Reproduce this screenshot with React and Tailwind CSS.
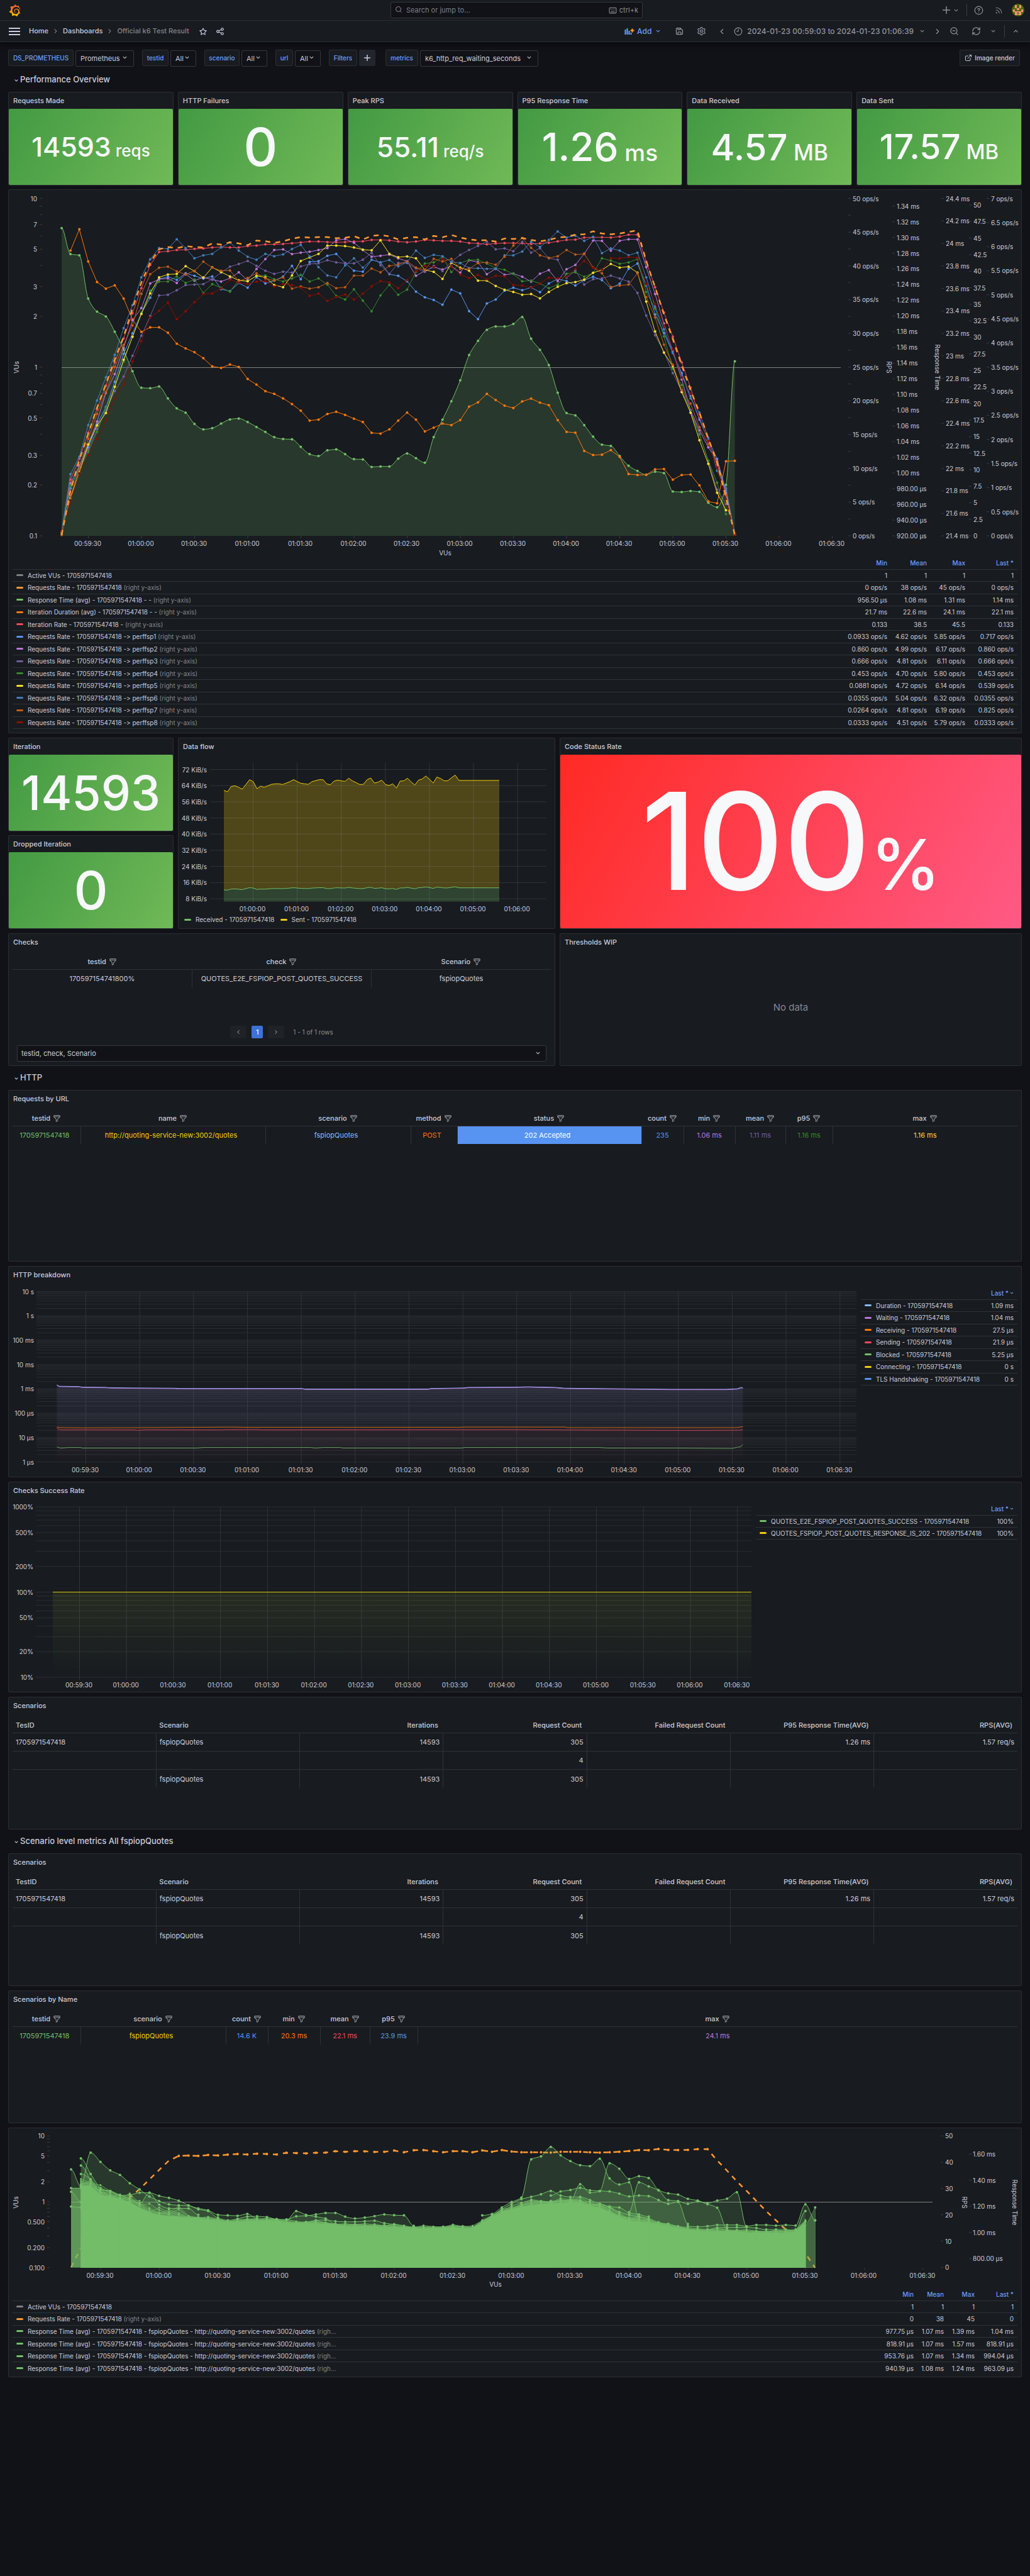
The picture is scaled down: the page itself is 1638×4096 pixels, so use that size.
import React from "react";
import { Search, Keyboard, Settings, ZoomOut, RefreshCw, Rss, ExternalLink, ChevronLeft, ChevronRight } from "lucide-react";
import { SiGrafana } from "react-icons/si";

/* ---------- icons ---------- */

const PATHS = {
  filter:
    "M19,2H5A3,3,0,0,0,2,5V6.17a3,3,0,0,0,.25,1.2l0,.06a2.81,2.81,0,0,0,.59.86L9,14.41V21a1,1,0,0,0,.47.85A1,1,0,0,0,10,22a1,1,0,0,0,.45-.11l4-2A1,1,0,0,0,15,19V14.41l6.12-6.12a2.81,2.81,0,0,0,.59-.86l0-.06A3,3,0,0,0,22,6.17V5A3,3,0,0,0,19,2ZM13.29,13.29A1,1,0,0,0,13,14v4.38l-2,1V14a1,1,0,0,0-.29-.71L5.41,8H18.59ZM20,6H4V5A1,1,0,0,1,5,4H19a1,1,0,0,1,1,1Z",
  star: "M22,9.67A1,1,0,0,0,21.14,9l-5.69-.83L12.9,3a1,1,0,0,0-1.8,0L8.55,8.16,2.86,9a1,1,0,0,0-.81.68,1,1,0,0,0,.25,1l4.13,4-1,5.68A1,1,0,0,0,6.9,21.44L12,18.77l5.1,2.67a.93.93,0,0,0,.46.12,1,1,0,0,0,.59-.19,1,1,0,0,0,.4-1l-1-5.68,4.13-4A1,1,0,0,0,22,9.67Zm-6.15,4a1,1,0,0,0-.29.88l.72,4.2-3.76-2a1.06,1.06,0,0,0-.94,0l-3.76,2,.72-4.2a1,1,0,0,0-.29-.88l-3-3,4.21-.61a1,1,0,0,0,.76-.55L12,5.7l1.88,3.82a1,1,0,0,0,.76.55l4.21.61Z",
  down: "M17,9.17a1,1,0,0,0-1.41,0L12,12.71,8.46,9.17a1,1,0,0,0-1.41,0,1,1,0,0,0,0,1.42l4.24,4.24a1,1,0,0,0,1.42,0L17,10.59A1,1,0,0,0,17,9.17Z",
  share:
    "M18,14a4,4,0,0,0-3.08,1.48l-5.1-2.35a3.64,3.64,0,0,0,0-2.26l5.1-2.35A4,4,0,1,0,14,6a4.17,4.17,0,0,0,.07.71L8.79,9.14a4,4,0,1,0,0,5.72l5.28,2.43A4.17,4.17,0,0,0,14,18a4,4,0,1,0,4-4ZM18,4a2,2,0,1,1-2,2A2,2,0,0,1,18,4ZM6,14a2,2,0,1,1,2-2A2,2,0,0,1,6,14Zm12,6a2,2,0,1,1,2-2A2,2,0,0,1,18,20Z",
  save: "m20.71 9.29-6-6a1 1 0 0 0-.32-.21A1.09 1.09 0 0 0 14 3H6a3 3 0 0 0-3 3v12a3 3 0 0 0 3 3h12a3 3 0 0 0 3-3v-8a1 1 0 0 0-.29-.71zM9 5h4v2H9zm6 14H9v-3a1 1 0 0 1 1-1h4a1 1 0 0 1 1 1zm4-1a1 1 0 0 1-1 1h-1v-3a3 3 0 0 0-3-3h-4a3 3 0 0 0-3 3v3H6a1 1 0 0 1-1-1V6a1 1 0 0 1 1-1h1v3a1 1 0 0 0 1 1h6a1 1 0 0 0 1-1V6.41l4 4z",
};

function Icon({ name, className }) {
  return (
    <svg viewBox="0 0 24 24" fill="currentColor" className={className} aria-hidden="true">
      <path d={PATHS[name]} />
    </svg>
  );
}

function LogoIcon() {
  return (
    <>
      <svg width="0" height="0" className="absolute" aria-hidden="true">
        <defs>
          <linearGradient id="logo" x1="0" y1="1" x2="0" y2="0">
            <stop offset="0" stopColor="#fbca0a" />
            <stop offset="0.45" stopColor="#f9871b" />
            <stop offset="1" stopColor="#f05a2b" />
          </linearGradient>
        </defs>
      </svg>
      <SiGrafana className="size-[19px]" fill="url(#logo)" />
    </>
  );
}

function HelpIcon() {
  return (
    <svg viewBox="0 0 24 24" className="size-[15px]" fill="none" stroke="currentColor" strokeWidth="2" strokeLinecap="round">
      <circle cx="12" cy="12" r="10" />
      <path d="M9.5 9.5a2.5 2.5 0 1 1 3.5 2.3c-.7.3-1 .8-1 1.4M12 17v.1" />
    </svg>
  );
}

function ClockIcon() {
  return (
    <svg viewBox="0 0 24 24" className="size-[14px]" fill="none" stroke="currentColor" strokeWidth="2" strokeLinecap="round" strokeLinejoin="round">
      <circle cx="12" cy="12" r="10" />
      <path d="M12 6v6H8" />
    </svg>
  );
}

function AddPanelIcon() {
  return (
    <svg viewBox="0 0 16 13" className="h-[13px] w-[16px]" fill="none">
      <path d="M1.5 4v8M4.500 2v10M7.500 6v6M10.500 9v3" stroke="#6e9fff" strokeWidth="2" />
      <path d="M12.500 2.500v6M9.500 5.500h6" stroke="#ff9830" strokeWidth="2" />
    </svg>
  );
}

function Avatar() {
  return (
    <svg viewBox="0 0 20 20" className="size-[20px] rounded-full">
      <rect width="20" height="20" fill="#4d6a05" />
      <path
        fill="#f98f7c"
        d="M5 2h3v5h4V2h3v5h-3v3H8V7H5zM2 9h3v3h3v3H5v-2H2zM18 9h-3v3h-3v3h3v-2h3zM8 12h4v2H8zM5 15h4v3H5zM11 15h4v3h-4zM9 16h2v1H9z"
      />
    </svg>
  );
}

/* ---------- chart helpers ---------- */

const GREEN = "#73bf69";

const seriesPoints = (data, x0, step, y0, k) =>
  data.map((v, i) => (v == null ? null : [x0 + i * step, y0 + v * k])).filter(Boolean);

const line = (pts) => "M" + pts.map(([x, y]) => `${x.toFixed(1)} ${y.toFixed(1)}`).join("L");

function smooth(pts) {
  const n = pts.length;
  const slope = pts.map((p, i) => {
    if (i === 0 || i === n - 1) return 0;
    const a = (p[1] - pts[i - 1][1]) / (p[0] - pts[i - 1][0]);
    const b = (pts[i + 1][1] - p[1]) / (pts[i + 1][0] - p[0]);
    return a * b <= 0 ? 0 : (2 * a * b) / (a + b);
  });
  let d = `M${pts[0][0]} ${pts[0][1]}`;
  for (let i = 1; i < n; i++) {
    const [xa, ya] = pts[i - 1];
    const [xb, yb] = pts[i];
    const h = (xb - xa) / 3;
    d += `C${xa + h} ${ya + slope[i - 1] * h} ${xb - h} ${yb - slope[i] * h} ${xb} ${yb}`;
  }
  return d;
}

const close = (d, pts, base) => `${d}L${pts[pts.length - 1][0]} ${base}L${pts[0][0]} ${base}Z`;

function Dots({ pts, color, r = 2 }) {
  return (
    <g fill={color}>
      {pts.map(([x, y], i) => (
        <circle key={i} cx={x.toFixed(1)} cy={y.toFixed(1)} r={r} />
      ))}
    </g>
  );
}

function T({ x, y, end, mid, rotate, children }) {
  return (
    <text
      x={x}
      y={y}
      fontSize="10"
      fill="#ccccdc"
      dominantBaseline="central"
      textAnchor={end ? "end" : mid ? "middle" : "start"}
      transform={rotate ? `rotate(${rotate} ${x} ${y})` : undefined}
    >
      {children}
    </text>
  );
}

const clock = (seconds) => {
  const p = (n) => String(n).padStart(2, "0");
  return `${p(Math.floor(seconds / 3600))}:${p(Math.floor(seconds / 60) % 60)}:${p(seconds % 60)}`;
};
const TIMES = Array.from({ length: 15 }, (_, i) => clock(3570 + i * 30));
const TICK = "#3a3d43";
const GRID = "#2b2e33";

/* ---------- overview chart data ---------- */

const RESPONSE = [180,290,295,478,533,554,618,695,785,855,857,850,900,942,961,1008,1031,1026,1007,989,985,1000,1021,1042,1064,1072,1073,1105,1136,1144,1120,1116,1136,1157,1158,1190,1188,1188,1155,1133,1153,1172,1064,990,912,824,717,657,610,596,596,585,556,648,695,759,876,962,972,1013,1062,1096,1101,1144,1185,1207,1223,1210,1216,1294,1296,1292,1295,1341,1360,1266,743];
const DURATION = [null,275,185,321,408,436,422,478,567,619,600,600,622,669,689,705,730,765,771,757,767,818,842,870,881,900,924,952,994,990,966,957,970,986,1000,1046,1049,1031,994,960,990,1040,1024,1007,1013,992,935,917,881,907,931,941,913,901,918,929,992,1042,1045,1122,1140,1138,1119,1148,1220,1224,1223,1200,1199,1244,1224,1222,1268,1336,1344,1166,1164];
const REQ_RATE = [1478,1290,1160,1050,940,840,735,640,520,410,325,270,260,265,256,260,262,245,250,240,245,252,233,235,243,236,225,218,220,218,218,223,221,214,228,213,209,215,228,221,218,228,213,219,209,220,228,232,231,237,224,226,222,230,236,230,220,217,208,206,194,203,206,203,196,190,320,430,545,650,760,865,960,1070,1170,1320,1478];
const ITER_RATE = [1470,1243,1155,1046,946,846,748,646,540,434,336,281,278,273,271,268,266,262,260,262,262,256,254,249,249,247,244,241,237,237,239,240,239,237,236,230,230,232,237,240,237,230,232,234,234,237,243,245,249,245,243,243,244,247,245,242,236,230,229,220,219,219,220,216,208,208,322,430,537,639,748,855,980,1080,1180,1300,1476];
const NODES = [
  ["#5794f2", [1470,1281,1190,1108,1010,937,830,712,625,540,475,395,386,399,371,382,394,384,438,447,412,432,388,414,402,385,340,396,323,320,297,289,328,360,364,314,325,375,382,405,449,473,484,504,440,456,531,565,499,482,445,432,443,431,451,414,395,404,423,400,386,400,434,415,352,330,422,545,624,708,793,890,990,1075,1156,1290,1476]],
  ["#b877d9", [1470,1260,1185,1095,998,877,797,687,570,518,414,396,393,412,374,402,388,398,406,392,367,400,353,311,273,270,290,284,280,273,265,231,226,242,273,301,297,292,308,320,382,361,345,355,342,368,316,324,375,352,378,372,386,406,373,358,404,354,336,288,233,234,275,234,227,228,345,459,584,700,820,950,1035,1107,1165,1300,1476]],
  ["#705da0", [1470,1320,1190,1118,1030,950,870,808,720,635,552,465,462,443,421,419,417,396,368,343,332,319,340,360,374,364,368,342,332,329,316,325,329,329,314,285,337,374,327,328,350,365,340,362,322,293,273,255,237,270,266,278,238,284,265,308,314,390,360,419,396,393,381,393,406,454,550,633,705,793,870,950,1050,1165,1286,1347]],
  ["#37872d", [1470,1268,1200,1127,1042,941,850,744,640,537,445,406,406,385,412,398,454,417,432,449,400,404,382,380,396,406,393,378,406,393,419,467,482,439,487,532,465,420,462,440,365,330,325,303,366,328,315,314,330,350,356,374,405,402,414,434,419,373,367,386,370,308,317,331,325,311,450,520,638,775,844,960,1054,1163,1257,1390]],
  ["#fade2a", [1464,1322,1213,1095,1015,962,851,737,640,543,456,388,376,374,341,362,390,346,366,384,401,405,382,388,421,430,380,319,304,289,254,254,256,262,271,274,232,289,303,300,308,357,365,395,327,347,360,402,402,425,441,450,462,459,477,450,428,413,408,398,369,357,332,347,343,368,491,617,707,765,874,961,1077,1177,1299,1373]],
  ["#447ebc", [1462,1220,1147,1013,909,811,716,603,506,388,312,265,268,227,265,308,295,289,262,241,275,301,314,289,299,291,269,251,300,345,380,388,338,308,347,314,325,315,342,324,275,306,293,299,323,328,349,350,352,352,295,295,279,238,260,230,194,220,212,234,217,286,266,275,295,284,388,512,608,708,800,900,960,1068,1206,1280,1476]],
  ["#c15c17", [1478,1315,1198,1071,966,872,767,674,592,458,375,348,343,363,376,361,322,347,360,359,404,391,371,393,402,388,436,427,436,430,412,434,430,381,381,351,367,340,334,320,347,357,310,321,310,352,352,328,325,335,301,254,222,263,295,306,299,273,292,289,346,371,429,423,419,371,472,558,673,758,865,922,1022,1093,1168,1310,1476]],
  ["#890f02", [1463,1332,1217,1140,1070,992,900,840,745,658,558,530,495,565,531,493,458,457,435,398,411,417,406,404,427,417,421,432,467,457,488,471,461,482,457,426,404,410,434,400,362,340,345,310,343,376,391,378,397,382,384,421,423,432,414,390,393,386,352,319,347,356,307,308,302,306,417,500,591,693,812,880,975,1080,1194,1330,1476]],
];

const LOG_TICKS = [
  ["10", 10], ["", 9], ["", 8], ["7", 7], ["", 6], ["5", 5], ["", 4], ["3", 3], ["2", 2], ["1", 1],
  ["", 0.9], ["", 0.8], ["0.7", 0.7], ["", 0.6], ["0.5", 0.5], ["", 0.4], ["0.3", 0.3], ["0.2", 0.2], ["0.1", 0.1],
];

function OverviewChart() {
  const X0 = 98, STEP = 14.087, Y0 = 295, K = 0.376;
  const top = 315.5, base = 852;
  const pts = (d) => seriesPoints(d, X0, STEP, Y0, K);
  const ly = (v) => top + (1 - Math.log10(v)) * ((base - top) / 2);
  const axis = (count, first, last, f) =>
    Array.from({ length: count }, (_, i) => [f(i), first + (i * (last - first)) / (count - 1)]);
  const ops = axis(11, top, base, (i) => `${50 - i * 5} ops/s`);
  const rt = axis(22, 327.6, base, (i) => {
    const us = 1340 - i * 20;
    return us >= 1000 ? `${(us / 1000).toFixed(2)} ms` : `${us}.00 µs`;
  });
  const dur = axis(16, top, base, (i) => `${+(24.4 - i * 0.2).toFixed(1)} ms`);
  const iters = axis(21, 326, base, (i) => `${50 - i * 2.5}`);
  const node = axis(15, top, base, (i) => `${7 - i * 0.5} ops/s`);
  const resp = pts(RESPONSE);
  const respPath = smooth(resp);
  const duration = pts(DURATION);
  const iter = pts(ITER_RATE);
  return (
    <svg viewBox="14 302 1610 584" className="block h-auto w-full" role="img" aria-label="VUs, request rate and response time">
      {LOG_TICKS.map(([t, v]) => (
        <g key={v}>
          <path d={`M63 ${ly(v)}h4`} stroke={TICK} />
          {t && <T x={59} y={ly(v)} end>{t}</T>}
        </g>
      ))}
      {TIMES.map((t, i) => (
        <g key={t}>
          <path d={`M${140.5 + i * 84.5} 852v4`} stroke={TICK} />
          <T x={139.5 + i * 84.5} y={864} mid>{t}</T>
        </g>
      ))}
      <T x={708} y={879} mid>VUs</T>
      <T x={26} y={584} mid rotate={-90}>VUs</T>
      {[[ops, 1356], [rt, 1426], [dur, 1504], [iters, 1548], [node, 1576]].map(([ticks, x]) =>
        ticks.map(([t, y]) => (
          <g key={x + t}>
            <path d={`M${x - 7} ${y}h4`} stroke={TICK} />
            <T x={x} y={y}>{t}</T>
          </g>
        ))
      )}
      {ops.slice(1).map(([t, y]) => (
        <path key={t} d={`M1349 ${y - 27}h4`} stroke={TICK} />
      ))}
      <T x={1414} y={584} mid rotate={90}>RPS</T>
      <T x={1491} y={584} mid rotate={90}>Response Time</T>

      <path d="M98 584.500H1337" stroke="#808080" />
      <path d={close(respPath, resp, base)} fill={GREEN} fillOpacity="0.18" />
      <path d={respPath} fill="none" stroke={GREEN} />
      <Dots pts={resp} color={GREEN} />
      <path d={line(duration)} fill="none" stroke="#ff780a" />
      <Dots pts={duration} color="#ff780a" />
      <path d={line(iter)} fill="none" stroke="#f2495c" />
      <Dots pts={iter} color="#f2495c" />
      {NODES.map(([color, data]) => {
        const p = pts(data);
        return (
          <g key={color}>
            <path d={line(p)} fill="none" stroke={color} />
            <Dots pts={p} color={color} />
          </g>
        );
      })}
      <path d={line(pts(REQ_RATE))} fill="none" stroke="#ff9830" strokeWidth="2.500" strokeDasharray="8 8" />
    </svg>
  );
}

/* ---------- data flow chart ---------- */

const SENT = [984,990,968,965,971,979,960,940,948,977,967,971,965,959,957,957,960,954,948,940,948,955,957,959,948,944,940,940,957,961,946,942,945,947,934,945,952,960,959,940,933,954,950,942,960,964,957,975,946,945,934,949,962,942,937,925,938,954,929,935,945,944,932,921,943,943,943,943,943,943,943,943,943,943,943,943];

function DataFlowChart() {
  const K = 0.3865, Y0 = 876.4;
  const sent = seriesPoints(SENT, 356, 5.84, Y0, K);
  const recv = seriesPoints(SENT.map((v) => 1386 + (v - 948) * 0.2), 356, 5.84, Y0, K);
  const back = [...recv].reverse();
  return (
    <svg viewBox="284 1200 598 252" className="block h-auto w-full" role="img" aria-label="Data flow">
      {Array.from({ length: 9 }, (_, i) => (
        <T key={i} x={329} y={1223.5 + i * 25.7} end>{`${72 - i * 8} KiB/s`}</T>
      ))}
      {Array.from({ length: 7 }, (_, i) => (
        <T key={i} x={401.5 + i * 70.1} y={1445} mid>{clock(3600 + i * 60)}</T>
      ))}
      <path d={line(sent) + "L" + line(back).slice(1) + "Z"} fill="#f2cc0c" fillOpacity="0.25" />
      <path d={close(line(recv), recv, 1433.5)} fill={GREEN} fillOpacity="0.25" />
      <g stroke="#f0faff" strokeOpacity="0.11">
        {Array.from({ length: 9 }, (_, i) => (
          <path key={i} d={`M334 ${1223.5 + i * 25.7}H869`} />
        ))}
        {Array.from({ length: 7 }, (_, i) => (
          <path key={i} d={`M${402.5 + i * 70.1} 1213V1437`} />
        ))}
      </g>
      <path d={line(sent)} fill="none" stroke="#f2cc0c" />
      <path d={line(recv)} fill="none" stroke={GREEN} />
    </svg>
  );
}

/* ---------- HTTP breakdown chart ---------- */

const at = (list, dy = 0) => list.map(([x, y]) => [x * 0.5223, 2014.7 + (y + dy) * 0.43875]);
const WAITING = [[173,427],[180,432],[240,433],[250,435],[325,436],[330,437],[400,438],[530,439],[548,440],[920,440],[928,442],[1305,442],[1310,440],[1410,438],[1425,436],[1568,435],[1608,434],[1690,436],[1720,439],[1880,441],[2045,443],[2210,443],[2245,441],[2257,436],[2262,438]];
const RECEIVING = [[173,580],[185,582],[250,583],[440,582],[705,580],[760,581],[1400,581],[1410,580],[1720,580],[1730,582],[2240,582],[2262,579]];
const SENDING = [[173,584],[183,590],[410,590],[420,592],[440,590],[680,590],[690,589],[785,589],[795,590],[1570,589],[1690,590],[2090,592],[2250,591],[2262,589]];
const BLOCKED = [[173,652],[185,656],[210,654],[245,654],[250,656],[600,656],[620,654],[945,654],[960,656],[985,654],[1035,654],[1045,656],[1405,656],[1415,654],[1825,654],[1850,656],[2060,656],[2230,657],[2245,653],[2255,651],[2262,643]];

function BreakdownChart() {
  const labels = ["10 s", "1 s", "100 ms", "10 ms", "1 ms", "100 µs", "10 µs", "1 µs"];
  const top = 2053.5, decade = 38.73, base = top + 7 * decade;
  const w = at(WAITING), s = at(SENDING);
  return (
    <svg viewBox="14 2040 1348 308" className="block h-auto min-w-0 flex-1" role="img" aria-label="HTTP breakdown">
      <defs>
        <linearGradient id="wait" x1="0" y1="0" x2="0" y2="1">
          <stop offset="0" stopColor="#9a90e8" stopOpacity="0.12" />
          <stop offset="1" stopColor="#9a90e8" stopOpacity="0" />
        </linearGradient>
        <linearGradient id="send" x1="0" y1="0" x2="0" y2="1">
          <stop offset="0" stopColor="#f2495c" stopOpacity="0.06" />
          <stop offset="1" stopColor="#f2495c" stopOpacity="0" />
        </linearGradient>
      </defs>
      <g stroke={GRID}>
        {labels.map((_, i) => (
          <g key={i}>
            <path d={`M58 ${top + i * decade}H1362`} />
            {i < 7 &&
              [2, 3, 4, 5, 6, 7, 8, 9].map((m) => (
                <path key={m} d={`M58 ${top + (i + 1 - Math.log10(m)) * decade}H1362`} />
              ))}
          </g>
        ))}
        {TIMES.map((t, i) => (
          <path key={t} d={`M${136.500 + i * 85.66} ${top}V2328`} stroke="#303338" />
        ))}
      </g>
      {labels.map((t, i) => (
        <T key={t} x={54} y={top + i * decade} end>{t}</T>
      ))}
      {TIMES.map((t, i) => (
        <T key={t} x={135.500 + i * 85.66} y={2336.5} mid>{t}</T>
      ))}
      <path d={close(line(w), w, base)} fill="url(#wait)" />
      <path d={close(line(s), s, base)} fill="url(#send)" />
      <path d={line(w)} fill="none" stroke="#8ab8ff" />
      <path d={line(at(WAITING, 1.5))} fill="none" stroke="#b877d9" />
      <path d={line(at(RECEIVING))} fill="none" stroke="#ff780a" strokeOpacity="0.8" />
      <path d={line(s)} fill="none" stroke="#f2495c" strokeOpacity="0.8" />
      <path d={line(at(BLOCKED))} fill="none" stroke={GREEN} strokeOpacity="0.8" />
    </svg>
  );
}

/* ---------- checks success rate chart ---------- */

function SuccessChart() {
  const top = 2396, base = 2667;
  const y = (v) => top + ((3 - Math.log10(v)) * (base - top)) / 2;
  const lines = [10, 20, 30, 40, 50, 60, 70, 80, 90, 100, 200, 300, 400, 500, 600, 700, 800, 900, 1000];
  return (
    <svg viewBox="14 2383 1181 307" className="block h-auto min-w-0 flex-1" role="img" aria-label="Checks success rate">
      <defs>
        <linearGradient id="success" x1="0" y1="0" x2="0" y2="1">
          <stop offset="0" stopColor="#b8cc30" stopOpacity="0.1" />
          <stop offset="1" stopColor="#73bf69" stopOpacity="0" />
        </linearGradient>
      </defs>
      <g stroke={GRID}>
        {lines.map((v) => (
          <path key={v} d={`M57 ${y(v)}H1195`} />
        ))}
        {TIMES.map((t, i) => (
          <path key={t} d={`M${126.500 + i * 74.73} ${top}V2671`} stroke="#303338" />
        ))}
      </g>
      {[1000, 500, 200, 100, 50, 20, 10].map((v) => (
        <T key={v} x={53} y={y(v)} end>{`${v}%`}</T>
      ))}
      {TIMES.map((t, i) => (
        <T key={t} x={125.500 + i * 74.73} y={2678.5} mid>{t}</T>
      ))}
      <rect x="84" y={y(100)} width="1111" height={base - y(100)} fill="url(#success)" />
      <path d={`M84 ${y(100)}H1195`} stroke="#e0c80f" />
    </svg>
  );
}

/* ---------- scenario chart ---------- */

const ENVELOPE = [null,400,400,450,460,475,490,520,545,560,565,570,575,580,585,590,600,597,592,590,588,590,600,605,605,605,610,615,620,620,620,622,625,625,628,632,632,632,630,625,630,632,600,570,545,530,515,505,500,497,495,492,492,510,520,545,570,590,595,600,610,620,630,640,645,648,650,650,650,655,655,655,655,655,650,600];
const PEAKS = [
  { s: 0, d: [313, 405] },
  { s: 0, d: [415, 415, 412, 425, 430, 455, 452, 440, 440, 457, 468, 483, 508, 525, 535, 560, 563, 565, 555, 580] },
  { s: 0, d: [515, 520] },
  { s: 0, d: [435, 490] },
  { s: 1, d: [253, 338, 416, 458, 470, 490] },
  { s: 1, d: [292, 370, 440, 470, 480] },
  { s: 1, d: [338, 366, 420, 430, 452, 470, 500, 440, 505, 525, 525, 525, 560] },
  { s: 1, d: [400, 222, 272, 318, 343, 388, 422, 460, 485, 503, 508, 510, 530, 540, 575] },
  { s: 15, d: [580, 590, 582, 570, 568, 572, 585, 590, 540, 560, 570, 580, 610] },
  { s: 22, d: [585, 568, 565, 558, 550, 550, 570, 580, 575, 567, 558, 562, 563, 620] },
  { s: 24, d: [600, 590, 588, 595, 598, 598, 595, 592, 605, 612, 620] },
  { s: 42, d: [563, 555, 520, 490, 466, 258, 242, 191, 236, 268, 290, 295, 255, 362, 395, 383, 575] },
  { s: 43, d: [560, 530, 500, 475, 462, 448, 430, 455, 463, 463, 480, 500, 515, 520, 550, 558, 570] },
  { s: 49, d: [455, 433, 425, 413, 427, 430, 433, 445, 460, 455, 458, 480, 500, 490, 610] },
  { s: 51, d: [485, 393, 440, 432, 280, 310, 365, 350, 360, 425, 443, 450, 473, 482, 497, 482, 472, 437, 625] },
  { s: 57, d: [545, 383, 405, 427, 480, 485, 500, 487, 502, 522, 635] },
  { s: 44, d: [540, 512, 495, 482, 488, 490, 480, 485, 482, 505, 500, 520, 545, 560, 570, 580, 600, 610] },
  { s: 63, d: [622, 625, 622, 615, 615, 615, 622, 615, 615, 618, 615, 618, 503, 590] },
  { s: 65, d: [640, 630, 628, 628, 628, 632, 640, 640, 640, 645, 540] },
];
const GREENS_JITTER = [10, 22, 35, 16, 28];
const SCENARIO_RATE = [845,740,660,600,555,510,467,420,368,316,265,240,238,240,235,237,233,229,232,228,229,232,223,224,226,223,222,214,217,214,215,218,217,211,220,209,208,214,220,214,214,220,210,217,208,216,220,220,220,222,217,217,217,220,222,220,217,213,208,209,202,207,208,207,203,203,265,320,378,430,485,540,590,640,690,770,848];

function ScenarioChart() {
  const X0 = 113, STEP = 15.57, Y0 = 3357.9, K = 0.2925, base = 3605.5;
  const y = (v) => Y0 + v * K;
  const pts = (d) => seriesPoints(d, X0, STEP, Y0, K);
  const env = pts(ENVELOPE);
  const rate = pts(SCENARIO_RATE);
  const noisy = GREENS_JITTER.map((amp, k) =>
    pts(ENVELOPE.map((v, i) => (v == null ? null : v - (((i * 7 + k * 5) % 11) / 11) * amp * (i < 12 ? 1.8 : i > 45 && i < 60 ? 1 : 0.5))))
  );
  const left = [["10", 131], ["5", 239], ["2", 381], ["1", 489], ["0.500", 597], ["0.200", 739], ["0.100", 847]];
  return (
    <svg viewBox="14 3384 1610 255" className="block h-auto w-full" role="img" aria-label="Scenario response time">
      {left.map(([t, v]) => (
        <g key={t}>
          <path d={`M75 ${y(v)}h4`} stroke={TICK} />
          <T x={71} y={y(v)} end>{t}</T>
        </g>
      ))}
      {[147, 166, 189, 212, 275, 321, 505, 524, 546, 569, 631, 676].map((v) => (
        <path key={v} d={`M75 ${y(v)}h4`} stroke={TICK} />
      ))}
      {TIMES.map((t, i) => (
        <g key={t}>
          <path d={`M${160 + i * 93.42} 3606v3`} stroke={TICK} />
          <T x={159 + i * 93.42} y={3617.5} mid>{t}</T>
        </g>
      ))}
      {[50, 40, 30, 20, 10, 0].map((t, i) => (
        <g key={t}>
          <path d={`M1496 ${y(131 + i * 143)}h4`} stroke={TICK} />
          <T x={1503} y={y(131 + i * 143)}>{t}</T>
        </g>
      ))}
      {["1.60 ms", "1.40 ms", "1.20 ms", "1.00 ms", "800.00 µs"].map((t, i) => (
        <g key={t}>
          <path d={`M1541 ${y(230 + i * 142)}h4`} stroke={TICK} />
          <T x={1547} y={y(230 + i * 142)}>{t}</T>
        </g>
      ))}
      <T x={788} y={3632} mid>VUs</T>
      <T x={25} y={3502} mid rotate={-90}>VUs</T>
      <T x={1534} y={3502} mid rotate={90}>RPS</T>
      <T x={1614} y={3502} mid rotate={90}>Response Time</T>

      <path d="M113 3501.500H1483" stroke="#808080" />
      <path d={line(rate)} fill="none" stroke="#ff9830" strokeWidth="2.500" strokeDasharray="8 8" />
      <Dots pts={rate.slice(11, 66)} color="#ff9830" />
      <path d={`M113 ${y(415)}H128.6V${base}H113Z`} fill={GREEN} fillOpacity="0.5" />
      <path d={close(line(env), env, base)} fill={GREEN} />
      <path
        d={`M${X0 + 75 * STEP} ${y(625)}L${X0 + 76 * STEP} ${y(520)}V${base}H${X0 + 75 * STEP}Z`}
        fill={GREEN}
        fillOpacity="0.35"
        stroke={GREEN}
        strokeWidth="0.500"
      />
      <Dots pts={[[X0 + 76 * STEP, y(520)], [X0 + 76 * STEP, y(590)]]} color={GREEN} />
      {noisy.map((p, i) => (
        <g key={i}>
          <path d={close(line(p), p, base)} fill={GREEN} fillOpacity="0.18" stroke={GREEN} strokeWidth="0.700" />
          <Dots pts={p} color={GREEN} r={1.6} />
        </g>
      ))}
      {PEAKS.map(({ s, d }, i) => {
        const p = d.map((v, j) => [X0 + (s + j) * STEP, y(v)]);
        const path = smooth(p);
        return (
          <g key={i}>
            <path d={close(path, p, base)} fill={GREEN} fillOpacity="0.18" />
            <path d={path} fill="none" stroke={GREEN} />
            <Dots pts={p} color={GREEN} />
          </g>
        );
      })}
    </svg>
  );
}

/* ---------- layout pieces ---------- */

function Panel({ title, className = "", children }) {
  return (
    <section className={`flex flex-col rounded-[2px] border border-[#2b2e33] bg-[#181b1f] ${className}`}>
      {title && <h2 className="h-[26px] shrink-0 px-[7px] text-[11px] leading-[26px] font-medium">{title}</h2>}
      {children}
    </section>
  );
}

function Stat({ title, value, unit, size, unitSize = "", red }) {
  return (
    <Panel title={title} className="min-h-[149px]">
      <div
        className={
          "flex flex-1 items-center justify-center overflow-hidden rounded-[2px] font-medium text-[#f7f8fa] " +
          (red ? "bg-linear-[120deg] from-[#ff2a24] to-[#ff5a85]" : "bg-linear-[120deg] from-[#439a43] to-[#70b957]")
        }
      >
        <div className="flex items-baseline leading-none">
          <span className={size}>{value}</span>
          {unit && <span className={`${unitSize} whitespace-pre`}>{unit}</span>}
        </div>
      </div>
    </Panel>
  );
}

function RowTitle({ children }) {
  return (
    <h1 className="h-[38px] text-[13px] font-medium">
      <button type="button" className="flex h-full items-center pl-[7px]">
        <Icon name="down" className="mt-[2px] size-[12px]" />
        {children}
      </button>
    </h1>
  );
}

function Marker({ className }) {
  return <span className={`inline-block h-[3px] w-[11px] shrink-0 rounded-full ${className}`} />;
}

function SeriesTable({ heads, rows, widths, height, sorted, openEnd }) {
  return (
    <table className={`w-full table-fixed border-collapse text-[10px] leading-[14px] ${height}`}>
      <colgroup>
        <col />
        {widths.map((w, i) => (
          <col key={i} className={w} />
        ))}
      </colgroup>
      <thead>
        <tr className="h-[19px] border-b border-[#2f3237] text-[#6e9fff]">
          <th aria-label="Series" />
          {heads.map((h) => (
            <th key={h} className="pr-[6px] text-right font-medium whitespace-nowrap">
              <button type="button" className="inline-flex items-center">
                {h}
                {sorted && <Icon name="down" className="-mr-[2px] size-[10px]" />}
              </button>
            </th>
          ))}
        </tr>
      </thead>
      <tbody>
        {rows.map(([color, name, note, ...values], i) => (
          <tr key={i} className={openEnd && i === rows.length - 1 ? "" : "border-b border-[#2f3237]"}>
            <td className="py-0 pl-[6px]">
              <button type="button" className="flex items-center gap-[7px] text-left whitespace-nowrap">
                <Marker className={color} />
                <span>
                  {name}
                  {note && <span className="text-[#85868f]"> {note}</span>}
                </span>
              </button>
            </td>
            {values.map((v, j) => (
              <td key={j} className="py-0 pr-[6px] text-right whitespace-nowrap">{v}</td>
            ))}
          </tr>
        ))}
      </tbody>
    </table>
  );
}

function FilterTable({ cols, rows }) {
  return (
    <div className="mx-[6px] mt-[6px]">
      <table className="w-full table-fixed border-collapse text-[11px]">
        <colgroup>
          {cols.map(([, w], i) => (
            <col key={i} className={w} />
          ))}
        </colgroup>
        <thead>
          <tr className="h-[24px] border-b border-[#2f3237]">
            {cols.map(([name]) => (
              <th key={name} className="p-0 font-medium">
                <button type="button" className="inline-flex items-center gap-[4px] align-middle">
                  {name}
                  <Icon name="filter" className="size-[13px] text-[#8d8e99]" />
                </button>
              </th>
            ))}
          </tr>
        </thead>
        <tbody>
          {rows.map((cells, r) => (
            <tr key={r} className="h-[29px]">
              {cells.map(([text, style], i) => (
                <td key={i} className={`border-r border-[#2f3237] p-0 text-center whitespace-nowrap last:border-r-0 ${style}`}>
                  {text}
                </td>
              ))}
            </tr>
          ))}
        </tbody>
      </table>
    </div>
  );
}

function ScenariosPanel({ first }) {
  const heads = [first, "Scenario", "Iterations", "Request Count", "Failed Request Count", "P95 Response Time(AVG)", "RPS(AVG)"];
  const rows = [
    ["1705971547418", "fspiopQuotes", "14593", "305", "", "1.26 ms", "1.57 req/s"],
    ["", "", "", "4", "", "", ""],
    ["", "fspiopQuotes", "14593", "305", "", "", ""],
  ];
  return (
    <Panel title="Scenarios" className="min-h-[211px]">
      <div className="mx-[6px] mt-[6px]">
        <table className="w-full table-fixed border-collapse text-[11px]">
          <thead>
            <tr className="h-[24px] border-b border-[#2f3237]">
              {heads.map((h, i) => (
                <th key={h} className={`py-0 font-medium whitespace-nowrap ${i < 2 ? "pl-[5px] text-left" : "pr-[8px] text-right"}`}>
                  {h}
                </th>
              ))}
            </tr>
          </thead>
          <tbody>
            {rows.map((cells, r) => (
              <tr key={r} className="h-[29px] border-b border-[#2f3237] last:border-b-0">
                {cells.map((c, i) => (
                  <td
                    key={i}
                    className={`border-r border-[#2f3237] pt-[2px] pb-0 whitespace-nowrap last:border-r-0 ${i < 2 ? "pl-[5px] text-left" : "pr-[5px] text-right"}`}
                  >
                    {c}
                  </td>
                ))}
              </tr>
            ))}
          </tbody>
        </table>
      </div>
    </Panel>
  );
}

function Variable({ label, value, width, labelWidth }) {
  const id = React.useId();
  return (
    <div className="flex gap-[3px]">
      <label
        htmlFor={id}
        className={`flex h-[26px] items-center justify-center rounded-[2px] border border-[#2b2e33] bg-[#181b1f] text-[10px] font-medium text-[#6e9fff] ${labelWidth}`}
      >
        {label}
      </label>
      <div className={`relative ${width}`}>
        <select id={id} className="h-[26px] w-full appearance-none rounded-[2px] border border-[#34373d] bg-[#111217] pl-[7px] text-[11px]">
          <option>{value}</option>
        </select>
        <Icon name="down" className="pointer-events-none absolute top-[6px] right-[8px] size-[13px]" />
      </div>
    </div>
  );
}

function Header() {
  return (
    <header className="text-[11px] shadow-[0_3px_8px_rgba(0,0,0,0.6)]">
      <div className="flex h-[33px] items-center justify-between border-b border-[#2b2e33] bg-[#181b1f] pr-[9px] pl-[14px]">
        <a href="#home" aria-label="Grafana" className="flex-1">
          <LogoIcon />
        </a>
        <div className="relative w-[401px]">
          <Search className="absolute top-[6px] left-[7px] size-[12px] text-[#8d8e99]" />
          <input
            type="search"
            aria-label="Search"
            placeholder="Search or jump to..."
            className="block h-[26px] w-full rounded-[2px] border border-[#34373d] bg-[#111217] pl-[24px] placeholder:text-[#7d7e88]"
          />
          <span className="absolute top-[5px] right-[7px] flex items-center gap-[4px] text-[11px] text-[#8d8e99]">
            <Keyboard className="size-[13px]" />
            ctrl+k
          </span>
        </div>
        <div className="flex flex-1 items-center justify-end text-[#8d8e99]">
          <button type="button" aria-label="New" className="flex items-center gap-[3px]">
            <svg viewBox="0 0 12 12" className="size-[12px]" stroke="currentColor" strokeWidth="1.500">
              <path d="M6 0v12M0 6h12" />
            </svg>
            <Icon name="down" className="size-[13px]" />
          </button>
          <span className="mr-[11px] ml-[10px] h-[20px] w-px bg-[#3a3d43]" />
          <button type="button" aria-label="Help" className="mr-[18px]">
            <HelpIcon />
          </button>
          <button type="button" aria-label="News" className="mr-[14px]">
            <Rss className="size-[13px]" />
          </button>
          <button type="button" aria-label="Profile">
            <Avatar />
          </button>
        </div>
      </div>
      <div className="flex h-[34px] items-center border-b border-[#2b2e33] bg-[#181b1f] pr-[15px] pl-[14px] font-medium">
        <button type="button" aria-label="Menu" className="mr-[14px]">
          <svg viewBox="0 0 18 12" className="h-[12px] w-[18px]" fill="currentColor">
            <path d="M0 0h18v2H0zM0 5h18v2H0zM0 10h18v2H0z" />
          </svg>
        </button>
        <nav className="flex items-center gap-[6px]" aria-label="Breadcrumbs">
          <a href="#home">Home</a>
          <ChevronRight className="size-[11px]" />
          <a href="#dashboards">Dashboards</a>
          <ChevronRight className="size-[11px]" />
          <span className="text-[#85868f]">Official k6 Test Result</span>
        </nav>
        <button type="button" aria-label="Mark as favorite" className="ml-[15px]">
          <Icon name="star" className="size-[14px]" />
        </button>
        <button type="button" aria-label="Share" className="ml-[13px]">
          <Icon name="share" className="size-[14px]" />
        </button>
        <div className="ml-auto flex items-center text-[#9394a0]">
          <button type="button" className="flex items-center gap-[4px] text-[12px] text-[#6e9fff]">
            <AddPanelIcon />
            Add
            <Icon name="down" className="size-[13px]" />
          </button>
          <button type="button" aria-label="Save" className="ml-[20px]">
            <Icon name="save" className="size-[15px]" />
          </button>
          <button type="button" aria-label="Settings" className="ml-[20px]">
            <Settings className="size-[15px]" />
          </button>
          <button type="button" aria-label="Earlier" className="ml-[18px]">
            <ChevronLeft className="size-[14px]" />
          </button>
          <button type="button" className="ml-[12px] flex items-center gap-[7px] text-[12px]">
            <ClockIcon />
            2024-01-23 00:59:03 to 2024-01-23 01:06:39
            <Icon name="down" className="size-[13px]" />
          </button>
          <button type="button" aria-label="Later" className="ml-[11px]">
            <ChevronRight className="size-[14px]" />
          </button>
          <button type="button" aria-label="Zoom out" className="ml-[12px]">
            <ZoomOut className="size-[15px]" />
          </button>
          <button type="button" aria-label="Refresh" className="ml-[20px]">
            <RefreshCw className="size-[15px]" />
          </button>
          <button type="button" aria-label="Refresh interval" className="ml-[13px]">
            <Icon name="down" className="size-[13px]" />
          </button>
          <span className="mr-[10px] ml-[11px] h-[20px] w-px bg-[#3a3d43]" />
          <button type="button" aria-label="Hide top bar">
            <Icon name="down" className="size-[15px] rotate-180" />
          </button>
        </div>
      </div>
    </header>
  );
}

/* ---------- table data ---------- */

const ID = "1705971547418";
const RIGHT = "(right y-axis)";

const OVERVIEW_ROWS = [
  ["bg-[#808080]", `Active VUs - ${ID}`, "", "1", "1", "1", "1"],
  ["bg-[#ff9830]", `Requests Rate - ${ID}`, RIGHT, "0 ops/s", "38 ops/s", "45 ops/s", "0 ops/s"],
  ["bg-[#73bf69]", `Response Time (avg) - ${ID} - -`, RIGHT, "956.50 µs", "1.08 ms", "1.31 ms", "1.14 ms"],
  ["bg-[#ff780a]", `Iteration Duration (avg) - ${ID} - -`, RIGHT, "21.7 ms", "22.6 ms", "24.1 ms", "22.1 ms"],
  ["bg-[#f2495c]", `Iteration Rate - ${ID} -`, RIGHT, "0.133", "38.5", "45.5", "0.133"],
  ["bg-[#5794f2]", `Requests Rate - ${ID} -> perffsp1`, RIGHT, "0.0933 ops/s", "4.62 ops/s", "5.85 ops/s", "0.717 ops/s"],
  ["bg-[#b877d9]", `Requests Rate - ${ID} -> perffsp2`, RIGHT, "0.860 ops/s", "4.99 ops/s", "6.17 ops/s", "0.860 ops/s"],
  ["bg-[#705da0]", `Requests Rate - ${ID} -> perffsp3`, RIGHT, "0.666 ops/s", "4.81 ops/s", "6.11 ops/s", "0.666 ops/s"],
  ["bg-[#37872d]", `Requests Rate - ${ID} -> perffsp4`, RIGHT, "0.453 ops/s", "4.70 ops/s", "5.80 ops/s", "0.453 ops/s"],
  ["bg-[#fade2a]", `Requests Rate - ${ID} -> perffsp5`, RIGHT, "0.0881 ops/s", "4.72 ops/s", "6.14 ops/s", "0.539 ops/s"],
  ["bg-[#447ebc]", `Requests Rate - ${ID} -> perffsp6`, RIGHT, "0.0355 ops/s", "5.04 ops/s", "6.32 ops/s", "0.0355 ops/s"],
  ["bg-[#c15c17]", `Requests Rate - ${ID} -> perffsp7`, RIGHT, "0.0264 ops/s", "4.81 ops/s", "6.19 ops/s", "0.825 ops/s"],
  ["bg-[#890f02]", `Requests Rate - ${ID} -> perffsp8`, RIGHT, "0.0333 ops/s", "4.51 ops/s", "5.79 ops/s", "0.0333 ops/s"],
];

const BREAKDOWN_ROWS = [
  ["bg-[#8ab8ff]", `Duration - ${ID}`, "", "1.09 ms"],
  ["bg-[#b877d9]", `Waiting - ${ID}`, "", "1.04 ms"],
  ["bg-[#ff780a]", `Receiving - ${ID}`, "", "27.5 µs"],
  ["bg-[#f2495c]", `Sending - ${ID}`, "", "21.9 µs"],
  ["bg-[#73bf69]", `Blocked - ${ID}`, "", "5.25 µs"],
  ["bg-[#f2cc0c]", `Connecting - ${ID}`, "", "0 s"],
  ["bg-[#5794f2]", `TLS Handshaking - ${ID}`, "", "0 s"],
];

const SUCCESS_ROWS = [
  ["bg-[#73bf69]", `QUOTES_E2E_FSPIOP_POST_QUOTES_SUCCESS - ${ID}`, "", "100%"],
  ["bg-[#f2cc0c]", `QUOTES_FSPIOP_POST_QUOTES_RESPONSE_IS_202 - ${ID}`, "", "100%"],
];

const RESPONSE_NAME = `Response Time (avg) - ${ID} - fspiopQuotes - http://quoting-service-new:3002/quotes`;
const SCENARIO_ROWS = [
  ["bg-[#808080]", `Active VUs - ${ID}`, "", "1", "1", "1", "1"],
  ["bg-[#ff9830]", `Requests Rate - ${ID}`, RIGHT, "0", "38", "45", "0"],
  ["bg-[#73bf69]", RESPONSE_NAME, "(righ...", "977.75 µs", "1.07 ms", "1.39 ms", "1.04 ms"],
  ["bg-[#73bf69]", RESPONSE_NAME, "(righ...", "818.91 µs", "1.07 ms", "1.57 ms", "818.91 µs"],
  ["bg-[#73bf69]", RESPONSE_NAME, "(righ...", "953.76 µs", "1.07 ms", "1.34 ms", "994.04 µs"],
  ["bg-[#73bf69]", RESPONSE_NAME, "(righ...", "940.19 µs", "1.08 ms", "1.24 ms", "963.09 µs"],
];

export default function App() {
  return (
    <div className="min-h-screen bg-[#111217] font-['Inter',sans-serif] text-[#ccccdc] [font-variant-ligatures:no-contextual]">
      <Header />
      <main className="px-[13px] pt-[12px]">
        <div className="mb-[3px] flex h-[26px]">
          <div className="flex gap-[13px]">
            <Variable label="DS_PROMETHEUS" labelWidth="w-[104px]" value="Prometheus" width="w-[93px]" />
            <Variable label="testid" labelWidth="w-[42px]" value="All" width="w-[41px]" />
            <Variable label="scenario" labelWidth="w-[56px]" value="All" width="w-[41px]" />
            <Variable label="url" labelWidth="w-[28px]" value="All" width="w-[41px]" />
            <div className="flex gap-[3px]">
              <span className="flex h-[26px] w-[45px] items-center justify-center rounded-[2px] border border-[#2b2e33] bg-[#181b1f] text-[10px] font-medium text-[#6e9fff]">
                Filters
              </span>
              <button type="button" aria-label="Add filter" className="mr-[3px] flex w-[26px] items-center justify-center rounded-[2px] bg-[#22252b]">
                <svg viewBox="0 0 10 10" className="size-[10px]" stroke="currentColor" strokeWidth="1.500">
                  <path d="M5 0v10M0 5h10" />
                </svg>
              </button>
            </div>
            <Variable label="metrics" labelWidth="w-[52px]" value="k6_http_req_waiting_seconds" width="w-[188px]" />
          </div>
          <a
            href="#image-render"
            className="mr-[3px] ml-auto flex w-[96px] items-center justify-center gap-[4px] rounded-[2px] border border-[#2b2e33] bg-[#181b1f] text-[10px] font-medium whitespace-nowrap"
          >
            <ExternalLink className="size-[12px]" />
            Image render
          </a>
        </div>

        <RowTitle>Performance Overview</RowTitle>
        <div className="grid grid-cols-6 gap-[7px]">
          <Stat title="Requests Made" value="14593" unit=" reqs" size="text-[43px]" unitSize="text-[26px]" />
          <Stat title="HTTP Failures" value="0" size="text-[84px]" />
          <Stat title="Peak RPS" value="55.11" unit=" req/s" size="text-[44px]" unitSize="text-[26px]" />
          <Stat title="P95 Response Time" value="1.26" unit=" ms" size="text-[62px]" unitSize="text-[37px]" />
          <Stat title="Data Received" value="4.57" unit=" MB" size="text-[58px]" unitSize="text-[35px]" />
          <Stat title="Data Sent" value="17.57" unit=" MB" size="text-[55px]" unitSize="text-[33px]" />
        </div>

        <Panel className="mt-[6px] min-h-[865px]">
          <OverviewChart />
          <div className="mx-[6px]">
            <SeriesTable
              heads={["Min", "Mean", "Max", "Last *"]}
              rows={OVERVIEW_ROWS}
              widths={["w-[80px]", "w-[63px]", "w-[61px]", "w-[77px]"]}
              height="h-[273px]"
            />
          </div>
        </Panel>

        <div className="mt-[7px] grid grid-cols-[263fr_600fr_735fr] gap-[7px]">
          <div className="flex flex-col gap-[6px]">
            <Stat title="Iteration" value="14593" size="text-[75px]" />
            <Stat title="Dropped Iteration" value="0" size="text-[84px]" />
          </div>
          <Panel title="Data flow">
            <DataFlowChart />
            <div className="flex items-center gap-[9px] pl-[9px] text-[10px] leading-[20px]">
              <button type="button" className="flex items-center gap-[7px]">
                <Marker className="bg-[#73bf69]" />
                Received - {ID}
              </button>
              <button type="button" className="flex items-center gap-[7px]">
                <Marker className="bg-[#f2cc0c]" />
                Sent - {ID}
              </button>
            </div>
          </Panel>
          <Stat title="Code Status Rate" value="100" unit="%" size="text-[214px]" unitSize="text-[112px]" red />
        </div>

        <div className="mt-[7px] grid grid-cols-[870fr_735fr] gap-[7px]">
          <Panel title="Checks" className="min-h-[211px]">
            <FilterTable
              cols={[["testid", ""], ["check", ""], ["Scenario", ""]]}
              rows={[[["170597154741800%", ""], ["QUOTES_E2E_FSPIOP_POST_QUOTES_SUCCESS", ""], ["fspiopQuotes", ""]]]}
            />
            <div className="mt-auto mb-[11px] flex h-[20px] items-center justify-center gap-[8px] text-[10px]">
              <button type="button" aria-label="Previous page" className="flex h-full w-[26px] items-center justify-center rounded-[2px] bg-[#1f2227]">
                <ChevronLeft className="size-[10px]" />
              </button>
              <button type="button" className="h-full w-[18px] rounded-[2px] bg-[#3d71d9] font-medium text-white">1</button>
              <button type="button" aria-label="Next page" className="flex h-full w-[26px] items-center justify-center rounded-[2px] bg-[#1f2227]">
                <ChevronRight className="size-[10px]" />
              </button>
              <span className="pl-[6px] text-[#8d8e99]">1 - 1 of 1 rows</span>
            </div>
            <div className="relative mx-[13px] mb-[6px]">
              <select aria-label="Columns" className="block h-[26px] w-full appearance-none rounded-[2px] border border-[#34373d] bg-[#111217] pl-[6px] text-[11px]">
                <option>testid, check, Scenario</option>
              </select>
              <Icon name="down" className="pointer-events-none absolute top-[6px] right-[7px] size-[13px]" />
            </div>
          </Panel>
          <Panel title="Thresholds WIP">
            <p className="flex flex-1 items-center justify-center text-[15px] text-[#85868f]">No data</p>
          </Panel>
        </div>

        <RowTitle>HTTP</RowTitle>
        <Panel title="Requests by URL" className="min-h-[273px]">
          <FilterTable
            cols={[
              ["testid", "w-[108px]"], ["name", "w-[294px]"], ["scenario", "w-[231px]"], ["method", "w-[74px]"], ["status", "w-[293px]"],
              ["count", "w-[67px]"], ["min", "w-[82px]"], ["mean", "w-[80px]"], ["p95", "w-[75px]"], ["max", "w-[294px]"],
            ]}
            rows={[
              [
                [ID, "text-[#73bf69] pr-[6px]"],
                ["http://quoting-service-new:3002/quotes", "text-[#f2cc0c] pr-[6px]"],
                ["fspiopQuotes", "text-[#8ab8ff] pr-[6px]"],
                ["POST", "text-[#ff780a] pr-[6px]"],
                ["202 Accepted", "bg-[#5794f2] text-white pr-[6px]"],
                ["235", "text-[#5794f2]"],
                ["1.06 ms", "text-[#b877d9]"],
                ["1.11 ms", "text-[#705da0]"],
                ["1.16 ms", "text-[#37872d]"],
                ["1.16 ms", "text-[#fade2a]"],
              ],
            ]}
          />
        </Panel>

        <Panel title="HTTP breakdown" className="mt-[7px] min-h-[336px]">
          <div className="flex items-start">
            <BreakdownChart />
            <div className="mt-[7px] mr-[6px] ml-[7px] w-[249px]">
              <SeriesTable heads={["Last *"]} rows={BREAKDOWN_ROWS} widths={["w-[50px]"]} height="h-[156px]" sorted />
            </div>
          </div>
        </Panel>

        <Panel title="Checks Success Rate" className="mt-[7px] min-h-[335px]">
          <div className="flex items-start">
            <SuccessChart />
            <div className="mt-[7px] mr-[6px] ml-[7px] w-[416px]">
              <SeriesTable heads={["Last *"]} rows={SUCCESS_ROWS} widths={["w-[50px]"]} height="h-[58px]" sorted />
            </div>
          </div>
        </Panel>

        <div className="mt-[7px]">
          <ScenariosPanel first="TesID" />
        </div>

        <RowTitle>Scenario level metrics All fspiopQuotes</RowTitle>
        <ScenariosPanel first="TestID" />

        <Panel title="Scenarios by Name" className="mt-[7px] min-h-[211px]">
          <FilterTable
            cols={[
              ["testid", "w-[108px]"], ["scenario", "w-[231px]"], ["count", "w-[67px]"], ["min", "w-[83px]"],
              ["mean", "w-[79px]"], ["p95", "w-[76px]"], ["max", "w-[954px]"],
            ]}
            rows={[
              [
                [ID, "text-[#73bf69] pr-[6px]"],
                ["fspiopQuotes", "text-[#f2cc0c] pr-[6px]"],
                ["14.6 K", "text-[#5794f2]"],
                ["20.3 ms", "text-[#ff780a]"],
                ["22.1 ms", "text-[#f2495c]"],
                ["23.9 ms", "text-[#5794f2]"],
                ["24.1 ms", "text-[#b877d9]"],
              ],
            ]}
          />
        </Panel>

        <Panel className="mt-[7px] min-h-[397px]">
          <ScenarioChart />
          <div className="mx-[6px]">
            <SeriesTable
              heads={["Min", "Mean", "Max", "Last *"]}
              rows={SCENARIO_ROWS}
              widths={["w-[60px]", "w-[48px]", "w-[49px]", "w-[62px]"]}
              height="h-[136px]"
              openEnd
            />
          </div>
        </Panel>
      </main>
    </div>
  );
}
